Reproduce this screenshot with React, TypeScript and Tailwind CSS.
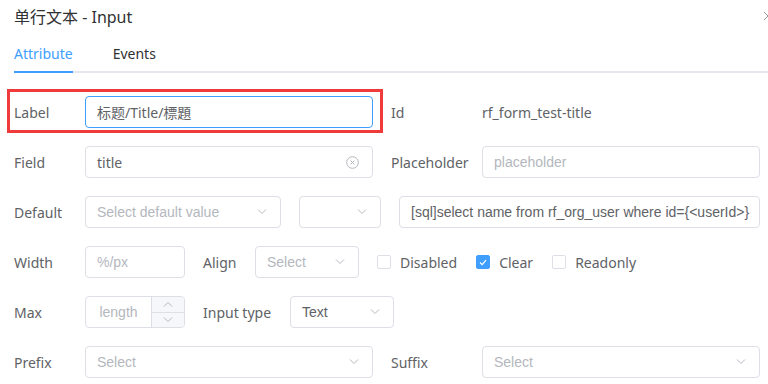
import React from 'react';

const labelFont = { fontFamily: '"Noto Sans", "Noto Sans CJK SC", sans-serif' };

const Arrow: React.FC<{ up?: boolean }> = ({ up }) => (
  <svg width="10" height="6" viewBox="0 0 10 6" className="shrink-0">
    <path
      d={up ? 'M1 5.5 L5 1.5 L9 5.5' : 'M1 0.5 L5 4.5 L9 0.5'}
      fill="none"
      stroke="#b4b7bd"
      strokeWidth="1"
    />
  </svg>
);

const Select: React.FC<{ className: string; value?: string; placeholder?: string }> = ({
  className,
  value,
  placeholder,
}) => (
  <div
    className={`h-[32px] flex items-center justify-between pl-[11px] pr-[13px] border border-[#dcdfe6] rounded-[4px] bg-white text-[14px] ${className}`}
  >
    <span className={value ? 'text-[#606266]' : 'text-[#b4b7bd]'}>{value ?? placeholder}</span>
    <Arrow />
  </div>
);

const Label: React.FC<{ w: string; children: React.ReactNode }> = ({ w, children }) => (
  <div className={`${w} shrink-0 text-[14px] text-[#606266]`} style={labelFont}>
    {children}
  </div>
);

const CheckBox: React.FC<{ label: string; checked?: boolean; className?: string }> = ({
  label,
  checked,
  className = '',
}) => (
  <div className={`flex items-center ${className}`}>
    <span
      className={`w-[14px] h-[14px] rounded-[2px] border flex items-center justify-center ${
        checked ? 'bg-[#409eff] border-[#409eff]' : 'bg-white border-[#dcdfe6]'
      }`}
    >
      {checked && (
        <svg width="8" height="7" viewBox="0 0 8 7">
          <path d="M1 3.5 L3.2 5.6 L7 1.2" fill="none" stroke="#fff" strokeWidth="1.2" />
        </svg>
      )}
    </span>
    <span className="ml-[9px] text-[14px] text-[#606266]" style={labelFont}>
      {label}
    </span>
  </div>
);

const App: React.FC = () => {
  return (
    <div
      className="w-[768px] h-[384px] overflow-hidden bg-white"
      style={{ fontFamily: '"Liberation Sans", Arial, sans-serif' }}
    >
      {/* header */}
      <div className="h-[33px] flex items-center justify-between pl-[14px]">
        <span className="text-[16px] text-[#303133]" style={labelFont}>
          单行文本 - Input
        </span>
        <svg width="10" height="10" viewBox="0 0 10 10" className="-mr-[5px] mt-[-1px]">
          <path d="M1 1 L9 9 M9 1 L1 9" stroke="#909399" strokeWidth="1" />
        </svg>
      </div>

      {/* tabs */}
      <div className="ml-[14px] flex border-b-2 border-[#e4e7ed]" style={labelFont}>
        <div className="h-[40px] pt-[3px] flex items-center border-b-2 -mb-[2px] border-[#409eff] text-[14px] text-[#409eff]">
          Attribute
        </div>
        <div className="h-[40px] pt-[3px] ml-[40px] flex items-center border-b-2 -mb-[2px] border-transparent text-[14px] text-[#303133]">
          Events
        </div>
      </div>

      {/* form */}
      <div className="mt-[23px] pl-[14px] flex flex-col gap-[18px]">
        {/* Label / Id */}
        <div className="flex items-center h-[32px]">
          <div className="relative flex items-center">
            <span className="absolute -left-[7px] -top-[7px] -right-[10px] -bottom-[5px] border-[3px] border-[#ef3b3b]" />
            <Label w="w-[71px]">Label</Label>
            <div
              className="w-[288px] h-[32px] flex items-center px-[11px] border border-[#409eff] rounded-[4px] text-[14px] text-[#606266]"
              style={labelFont}
            >
              标题/Title/標題
            </div>
          </div>
          <div className="ml-[18px] flex items-center">
            <Label w="w-[91px]">Id</Label>
            <span className="text-[14px] text-[#606266]" style={labelFont}>
              rf_form_test-title
            </span>
          </div>
        </div>

        {/* Field / Placeholder */}
        <div className="flex items-center h-[32px]">
          <Label w="w-[71px]">Field</Label>
          <div className="w-[288px] h-[32px] flex items-center justify-between pl-[11px] pr-[13px] border border-[#dcdfe6] rounded-[4px] text-[14px] text-[#606266]">
            <span style={labelFont}>title</span>
            <svg width="13" height="13" viewBox="0 0 13 13">
              <circle cx="6.5" cy="6.5" r="5.8" fill="none" stroke="#b4b7bd" strokeWidth="1" />
              <path d="M4.6 4.6 L8.4 8.4 M8.4 4.6 L4.6 8.4" stroke="#b4b7bd" strokeWidth="1" />
            </svg>
          </div>
          <div className="ml-[18px] flex items-center">
            <Label w="w-[91px]">Placeholder</Label>
            <div className="w-[278px] h-[32px] flex items-center px-[11px] border border-[#dcdfe6] rounded-[4px] text-[14px] text-[#b4b7bd]">
              placeholder
            </div>
          </div>
        </div>

        {/* Default */}
        <div className="flex items-center h-[32px]">
          <Label w="w-[71px]">Default</Label>
          <Select className="w-[196px]" placeholder="Select default value" />
          <Select className="w-[82px] ml-[18px]" placeholder="" />
          <div className="ml-[18px] w-[361px] h-[32px] flex items-center px-[11px] border border-[#dcdfe6] rounded-[4px] text-[14px] text-[#606266] whitespace-nowrap">
            [sql]select name from rf_org_user where id={'{<userId>}'}
          </div>
        </div>

        {/* Width / Align / checkboxes */}
        <div className="flex items-center h-[32px]">
          <Label w="w-[71px]">Width</Label>
          <div className="w-[100px] h-[32px] flex items-center px-[11px] border border-[#dcdfe6] rounded-[4px] text-[14px] text-[#b4b7bd]">
            %/px
          </div>
          <div className="ml-[18px]">
            <Label w="w-[52px]">Align</Label>
          </div>
          <Select className="w-[104px]" placeholder="Select" />
          <CheckBox className="ml-[18px]" label="Disabled" />
          <CheckBox className="ml-[19px]" label="Clear" checked />
          <CheckBox className="ml-[19px]" label="Readonly" />
        </div>

        {/* Max / Input type */}
        <div className="flex items-center h-[32px]">
          <Label w="w-[71px]">Max</Label>
          <div className="w-[100px] h-[32px] flex border border-[#dcdfe6] rounded-[4px] overflow-hidden">
            <div className="flex-1 flex items-center justify-center text-[14px] text-[#b4b7bd]">length</div>
            <div className="w-[33px] flex flex-col border-l border-[#dcdfe6] bg-[#f5f7fa]">
              <div className="flex-1 flex items-center justify-center border-b border-[#dcdfe6]">
                <Arrow up />
              </div>
              <div className="flex-1 flex items-center justify-center">
                <Arrow />
              </div>
            </div>
          </div>
          <div className="ml-[18px]">
            <Label w="w-[87px]">Input type</Label>
          </div>
          <Select className="w-[104px]" value="Text" />
        </div>

        {/* Prefix / Suffix */}
        <div className="flex items-center h-[32px]">
          <Label w="w-[71px]">Prefix</Label>
          <Select className="w-[288px]" placeholder="Select" />
          <div className="ml-[18px] flex items-center">
            <Label w="w-[91px]">Suffix</Label>
            <Select className="w-[278px]" placeholder="Select" />
          </div>
        </div>
      </div>
    </div>
  );
};

export default App;
